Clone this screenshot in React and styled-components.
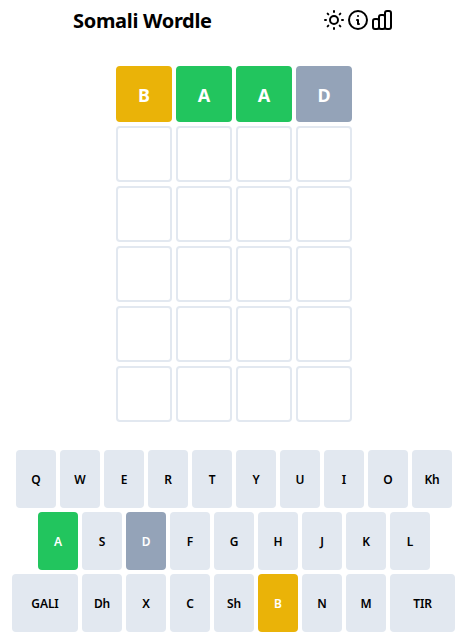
import React from 'react';
import styled, { createGlobalStyle } from 'styled-components';

const GREEN = '#22c55e';
const YELLOW = '#eab308';
const SLATE = '#94a3b8';

const GlobalStyle = createGlobalStyle`
  html, body {
    margin: 0;
    padding: 0;
    background: #ffffff;
    font-family: "Noto Sans", "Open Sans", sans-serif;
  }
`;

const Page = styled.div`
  width: 465px;
  height: 639px;
  overflow: hidden;
  padding-top: 8px;
  box-sizing: border-box;
`;

const Header = styled.header`
  display: flex;
  align-items: center;
  height: 24px;
  padding-left: 73px;
  margin-bottom: 34px;
`;

const Title = styled.h1`
  margin: 0;
  width: 249px;
  padding-top: 2px;
  font-size: 20px;
  line-height: 26px;
  font-weight: 700;
  letter-spacing: -0.3px;
  color: #000000;
`;

const Icon = styled.svg`
  display: block;
  width: 24px;
  height: 24px;
  fill: none;
  stroke: #000000;
  stroke-width: 2;
  stroke-linecap: round;
  stroke-linejoin: round;
`;

const Board = styled.div`
  display: grid;
  grid-template-columns: repeat(4, 56px);
  grid-auto-rows: 56px;
  gap: 4px;
  justify-content: center;
  padding-left: 3px;
  margin-bottom: 28px;
`;

const Cell = styled.div`
  box-sizing: border-box;
  display: flex;
  align-items: center;
  justify-content: center;
  padding-top: 2px;
  border-radius: 4px;
  border: 2px solid ${(props) => props.$color || '#e2e8f0'};
  background: ${(props) => props.$color || '#ffffff'};
  color: #ffffff;
  font-size: 18px;
  font-weight: 700;
`;

const Keyboard = styled.div`
  display: flex;
  flex-direction: column;
  gap: 4px;
`;

const KeyRow = styled.div`
  display: flex;
  gap: 4px;
  padding-left: ${(props) => props.$indent}px;
`;

const Key = styled.button`
  flex: none;
  width: ${(props) => props.$width || 40}px;
  height: 58px;
  padding: 0;
  border: none;
  border-radius: 4px;
  background: ${(props) => props.$color || '#e2e8f0'};
  color: ${(props) => (props.$color ? '#ffffff' : '#000000')};
  font-family: inherit;
  font-size: 12px;
  font-weight: 600;
  letter-spacing: -0.1px;
`;

const guess = [
  ['B', YELLOW],
  ['A', GREEN],
  ['A', GREEN],
  ['D', SLATE],
];

const keyColors = { A: GREEN, D: SLATE, B: YELLOW };

const keyRows = [
  { indent: 16, keys: ['Q', 'W', 'E', 'R', 'T', 'Y', 'U', 'I', 'O', 'Kh'] },
  { indent: 38, keys: ['A', 'S', 'D', 'F', 'G', 'H', 'J', 'K', 'L'] },
  { indent: 12, keys: ['GALI', 'Dh', 'X', 'C', 'Sh', 'B', 'N', 'M', 'TIR'] },
];

const wideKeys = { GALI: 66, TIR: 65 };

export default function App() {
  return (
    <Page>
      <GlobalStyle />
      <Header>
        <Title>Somali Wordle</Title>
        <Icon viewBox="0 0 24 24">
          <path d="M12 3v1m0 16v1m9-9h-1M4 12H3m15.364 6.364l-.707-.707M6.343 6.343l-.707-.707m12.728 0l-.707.707M6.343 17.657l-.707.707M16 12a4 4 0 11-8 0 4 4 0 018 0z" />
        </Icon>
        <Icon viewBox="0 0 24 24">
          <path d="M13 16h-1v-4h-1m1-4h.01M21 12a9 9 0 11-18 0 9 9 0 0118 0z" />
        </Icon>
        <Icon viewBox="0 0 24 24">
          <path d="M9 19v-6a2 2 0 00-2-2H5a2 2 0 00-2 2v6a2 2 0 002 2h2a2 2 0 002-2zm0 0V9a2 2 0 012-2h2a2 2 0 012 2v10m-6 0a2 2 0 002 2h2a2 2 0 002-2m0 0V5a2 2 0 012-2h2a2 2 0 012 2v14a2 2 0 01-2 2h-2a2 2 0 01-2-2z" />
        </Icon>
      </Header>
      <Board>
        {guess.map(([letter, color], i) => (
          <Cell key={i} $color={color}>{letter}</Cell>
        ))}
        {Array.from({ length: 20 }, (_, i) => (
          <Cell key={`empty-${i}`} />
        ))}
      </Board>
      <Keyboard>
        {keyRows.map((row) => (
          <KeyRow key={row.indent} $indent={row.indent}>
            {row.keys.map((k) => (
              <Key key={k} $color={keyColors[k]} $width={wideKeys[k]}>{k}</Key>
            ))}
          </KeyRow>
        ))}
      </Keyboard>
    </Page>
  );
}
